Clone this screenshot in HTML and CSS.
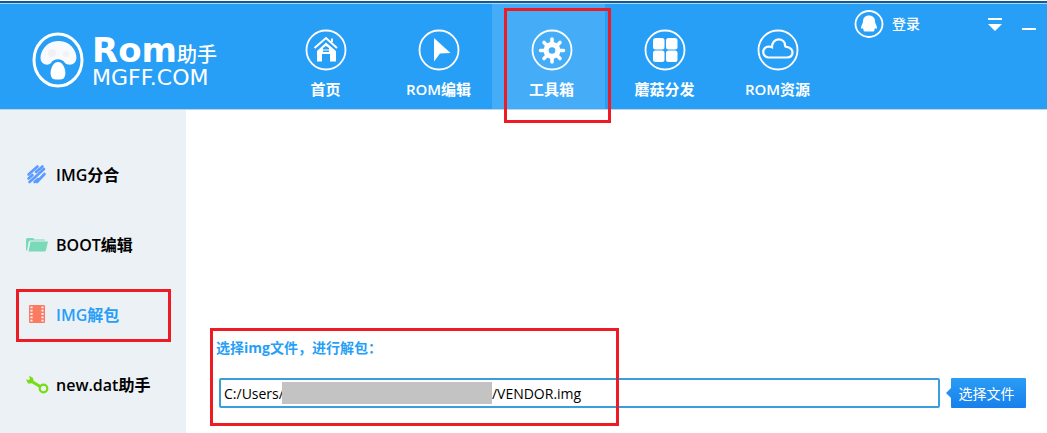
FILE: index.html
```html
<!DOCTYPE html>
<html lang="zh-CN">
<head>
<meta charset="utf-8">
<title>Rom助手</title>
<link rel="stylesheet" href="styles.css">
</head>
<body>
<header class="header">
  <a class="brand" href="#">
    <svg class="brand-mark" viewBox="0 0 52 56">
      <ellipse cx="26" cy="28" rx="24" ry="26" fill="none" stroke="#fff" stroke-width="3"/>
      <path d="M12 32C6 29 8 18 16 12c6-4 15-4 21 0 8 6 10 17 4 20-3 1-6 1-8-1-3-5-11-5-14 0-2 2-4 2-7 1Z" fill="#f8fafd"/>
      <path d="M20 46c-2-3-2-8 1-13 2-4 8-4 10 0 3 5 3 10 1 13-1 2-11 2-12 0Z" fill="#fff"/>
      <circle cx="20" cy="21" r="4" fill="#f1f2f6"/><circle cx="34" cy="22" r="3" fill="#f1f2f6"/>
    </svg>
    <span class="brand-text">
      <span class="brand-top"><span class="brand-rom">Rom</span><span class="brand-cn">助手</span></span>
      <span class="brand-site">MGFF.COM</span>
    </span>
  </a>
  <nav class="nav">
    <a class="nav-item" href="#">
      <svg class="nav-icon" viewBox="0 0 42 42"><circle cx="21" cy="21" r="19.5" fill="none" stroke="#fff" stroke-width="1.8"/>
        <path d="M9.500 19 21 9l11 10M27 13V9.500" fill="none" stroke="#fff" stroke-width="2"/>
        <path fill-rule="evenodd" d="M21 13.500 31 22v10.500h-6V25h-8v7.500h-5V22ZM18 19v4h6v-4l-3-2Z" fill="#fff"/>
        <path d="M18 21h6" stroke="#fff"/></svg>
      <span>首页</span>
    </a>
    <a class="nav-item" href="#">
      <svg class="nav-icon" viewBox="0 0 42 42"><circle cx="21" cy="21" r="19.500" fill="none" stroke="#fff" stroke-width="1.8"/>
        <path d="M16 9 32.500 24 22 24.500 16 32.500Z" fill="#fff"/></svg>
      <span>ROM编辑</span>
    </a>
    <a class="nav-item nav-item-active" href="#" aria-current="page">
      <svg class="nav-icon" viewBox="0 0 42 42"><circle cx="21" cy="21" r="19.500" fill="none" stroke="#fff" stroke-width="1.8"/>
        <g stroke="#fff" stroke-width="3.600" stroke-linecap="round"><path d="M21 10v23M9.500 21.500h23M13 13.500l16 16M29 13.500l-16 16"/></g>
        <circle cx="21" cy="21.500" r="8.500" fill="#fff"/><circle cx="21" cy="21.500" r="3.300" fill="#45acf8"/></svg>
      <span>工具箱</span>
      <span class="mark mark-nav"></span>
    </a>
    <a class="nav-item" href="#">
      <svg class="nav-icon" viewBox="0 0 42 42"><circle cx="21" cy="21" r="19.500" fill="none" stroke="#fff" stroke-width="1.8"/>
        <g fill="#fff"><rect x="9" y="9" width="11.500" height="11.500" rx="2.500"/><rect x="22" y="9" width="11.500" height="11.500" rx="2.500"/><rect x="9" y="21.500" width="11.500" height="11.500" rx="2.500"/><rect x="22" y="21.500" width="11.500" height="11.500" rx="2.500"/></g></svg>
      <span>蘑菇分发</span>
    </a>
    <a class="nav-item" href="#">
      <svg class="nav-icon" viewBox="0 0 42 42"><circle cx="21" cy="21" r="19.500" fill="none" stroke="#fff" stroke-width="1.8"/>
        <path d="M12 28.500a5.500 5.500 0 0 1-.5-11c1.500 0 2.500.3 3.500.8 0-5 3-8 6.500-8 4 0 6.500 2.500 6.500 6-.2 1.200.5 1.500 1.500 1.500 3 .8 6 2 6 5.500s-2.500 5.200-5.500 5.200Z" fill="none" stroke="#fff" stroke-width="2.200"/></svg>
      <span>ROM资源</span>
    </a>
  </nav>
  <div class="tools">
    <button class="login" type="button">
      <svg class="login-icon" viewBox="0 0 30 28"><ellipse cx="15" cy="14" rx="13.500" ry="13" fill="none" stroke="#fff" stroke-width="1.800"/>
        <path d="M15 5.500c4 0 6 2.500 6 6 0 2 2 4 2 6.500 0 1-.7 1-1.700 0 0 1-.6 1.500-1.300 2 1 .6.500 1.500-1 1.500h-8c-1.500 0-2-1-1-1.500-.7-.5-1.300-1-1.300-2-1 1-1.700 1-1.700 0 0-2.500 2-4.500 2-6.500 0-3.500 2-6 6-6Z" fill="#fff"/></svg>
      <span>登录</span>
    </button>
    <button class="win-button" type="button" aria-label="菜单"><svg class="win-icon" viewBox="0 0 14 14"><path d="M0 0h14v2H0ZM0 6h14l-7 7Z" fill="#fff"/></svg></button>
    <button class="win-button" type="button" aria-label="最小化"><svg class="win-icon" viewBox="0 0 14 14"><path d="M0 10h14v2H0Z" fill="#fff"/></svg></button>
  </div>
</header>
<div class="body">
  <aside class="sidebar">
    <a class="side-item" href="#">
      <svg class="side-icon" viewBox="0 0 24 20"><g stroke="#5b9bff" stroke-width="2.600" stroke-linecap="round" fill="none"><path d="M3.500 10.500 12.500 2.500M3.500 14.500l4-3.500M11 8l6.500-5.500M4.500 18 13 10.500M13.500 10 19 5M9.500 18l3.500-3M12 18l7.500-8"/></g></svg>
      <span>IMG分合</span>
    </a>
    <a class="side-item" href="#">
      <svg class="side-icon" viewBox="0 0 24 20"><path d="M1 16V5.500q0-1.500 1.500-1.500H8L9.500 5.500H19q1 0 1 1H5.500Q4 6.500 3.700 8L2 17Z" fill="#78dab6"/><path d="M5.500 7.500h17.500l-2 8.500q-.3 1.500-1.500 1.500h-16Z" fill="#78dab6"/></svg>
      <span>BOOT编辑</span>
    </a>
    <a class="side-item side-item-active" href="#" aria-current="page">
      <svg class="side-icon" viewBox="0 0 24 20"><rect x="4" y="1" width="16" height="18" rx="1" fill="#fc7b60"/><path d="M6.500 2.500v16M17.500 2.500v16" stroke="#ecf1f6" stroke-width="2.200" stroke-dasharray="1.800 1.500"/></svg>
      <span>IMG解包</span>
      <span class="mark mark-side"></span>
    </a>
    <a class="side-item" href="#">
      <svg class="side-icon" viewBox="0 0 24 20"><path d="M5 6.500 16 13" stroke="#76dd12" stroke-width="3"/><path d="M1 5.500 4 6 5 4.500 4 1.500 8 4 8.500 7 6 9.500H3Z" fill="#76dd12"/><circle cx="18.500" cy="14.500" r="3.800" fill="none" stroke="#76dd12" stroke-width="2.200"/></svg>
      <span>new.dat助手</span>
    </a>
  </aside>
  <main class="content">
    <form class="form">
      <label class="form-label" for="path">选择img文件，进行解包：</label>
      <div class="form-row">
        <div class="field">
          <span>C:/Users/</span><span class="redacted"></span><input class="field-input" id="path" type="text" value="/VENDOR.img">
        </div>
        <button class="choose" type="button">选择文件</button>
      </div>
      <span class="mark mark-form"></span>
    </form>
  </main>
</div>
</body>
</html>
```
FILE: styles.css
```css
* { box-sizing: border-box; }
body {
  margin: 0;
  background: #fff;
  color: #000;
  font-family: "Open Sans", "Noto Sans CJK SC", sans-serif;
}
a { color: inherit; text-decoration: none; }
button { border: 0; padding: 0; background: none; color: inherit; font: inherit; }
svg { display: block; flex: none; }

.header {
  display: flex;
  align-items: stretch;
  height: 110px;
  border-top: 1px solid #fff;
  border-bottom: 1px solid #c3d2dc;
  background: linear-gradient(#0e5c9c 0 2px, #b5d5e8 2px 3px, #289ff6 3px);
  color: #fff;
}
.brand {
  display: flex;
  align-items: center;
  gap: 8px;
  width: 266px;
  padding: 10px 0 0 32px;
}
.brand-mark { width: 52px; height: 56px; }
.brand-text {
  display: flex;
  flex-direction: column;
  padding-top: 2px;
  font-family: "DejaVu Sans", "Noto Sans CJK SC", sans-serif;
}
.brand-top { display: flex; align-items: baseline; line-height: 30px; }
.brand-rom { font-size: 34px; font-weight: 700; }
.brand-cn { font-size: 20px; font-weight: 500; font-family: "Noto Sans CJK SC", sans-serif; }
.brand-site { font-size: 22px; line-height: 18px; }

.nav { display: flex; padding-top: 3px; }
.nav-item {
  position: relative;
  display: flex;
  flex-direction: column;
  align-items: center;
  gap: 7px;
  width: 113px;
  padding: 25px 0 0 6px;
  font-size: 15px;
  font-weight: 600;
  line-height: 22px;
}
.nav-item-active { background: #45acf8; }
.nav-icon { width: 42px; height: 42px; }

.tools {
  display: flex;
  align-items: flex-start;
  flex: 1;
  padding: 9px 11px 0 0;
  margin-left: 23px;
}
.login {
  display: flex;
  align-items: center;
  gap: 8px;
  margin-right: auto;
  font-size: 14px;
  font-weight: 500;
  line-height: 28px;
}
.login-icon { width: 30px; height: 28px; }
.win-button { padding-top: 8px; margin-left: 20px; }
.win-icon { width: 14px; height: 14px; }

.body { display: flex; min-height: calc(100vh - 110px); }
.sidebar { flex: none; width: 186px; padding-top: 29px; background: #ecf1f6; }
.side-item {
  position: relative;
  display: flex;
  align-items: center;
  gap: 7px;
  height: 70px;
  padding-left: 25px;
  font-size: 16px;
  font-weight: 600;
}
.side-item-active { color: #289ff6; }
.side-icon { width: 24px; height: 20px; }

.content { flex: 1; padding: 218px 21px 0 24px; }
.form { position: relative; padding-left: 9px; }
.form-label {
  display: block;
  margin: 0 0 20px -3px;
  padding-top: 9px;
  color: #289ff6;
  font-size: 14px;
  font-weight: 700;
  line-height: 21px;
}
.form-row { display: flex; gap: 11px; }
.field {
  display: flex;
  align-items: center;
  flex: 1;
  height: 30px;
  padding: 0 3px;
  border: 2px solid #399fdc;
  border-radius: 2px;
  font-size: 14px;
}
.redacted { width: 210px; height: 22px; margin-left: -2px; background: #c3c3c3; }
.field-input { flex: 1; min-width: 0; padding: 0; border: 0; outline: 0; background: none; color: inherit; font: inherit; }
.choose {
  position: relative;
  width: 75px;
  height: 30px;
  padding-right: 4px;
  border-radius: 1px;
  background: linear-gradient(#2a9df4, #1680ec);
  color: #fff;
  font-size: 14px;
}
.choose::before {
  content: "";
  position: absolute;
  top: 10px;
  left: -5px;
  border: 5px solid transparent;
  border-left: 0;
  border-right-color: #2390f0;
}

.mark { position: absolute; border: 3px solid #ed1c24; pointer-events: none; }
.mark-nav { inset: 4px -6px -14px 12px; }
.mark-side { inset: 10px 15px 7px 16px; }
.mark-form { top: 0; left: 0; width: 409px; height: 98px; }
```
